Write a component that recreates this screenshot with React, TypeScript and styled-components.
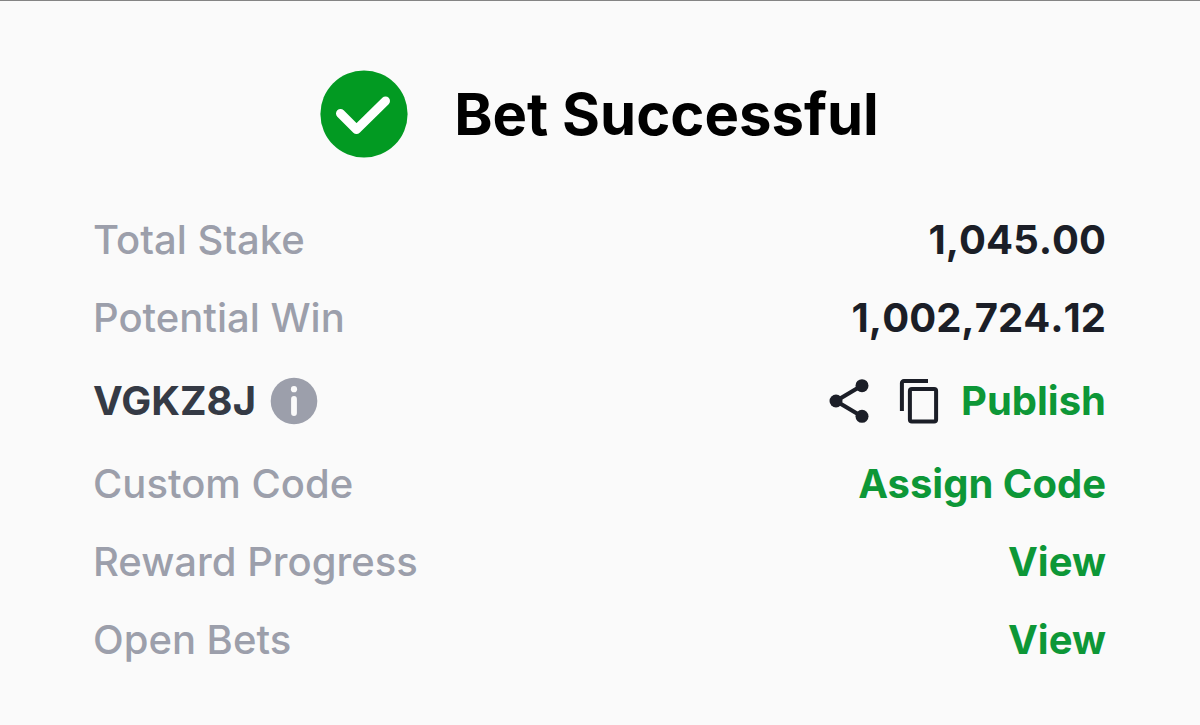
import React from "react";
import styled, { createGlobalStyle } from "styled-components";

const GlobalStyle = createGlobalStyle`
  *, *::before, *::after { box-sizing: border-box; }
  body {
    margin: 0;
    background: #fafafa;
    font-family: Inter, "Liberation Sans", sans-serif;
  }
`;

const Receipt = styled.main`
  min-height: 100vh;
  padding: 69px 94px 60px 93px;
  border-top: 1px solid #848484;
  background: #fafafa;
`;

const Header = styled.header`
  display: flex;
  align-items: center;
  justify-content: center;
  gap: 46px;
  margin-bottom: 58px;
`;

const Title = styled.h1`
  margin: 0;
  color: #000;
  font-size: 58px;
  font-weight: 700;
  line-height: 72px;
`;

const Details = styled.div`
  display: flex;
  flex-direction: column;
  gap: 30px;
`;

const Row = styled.div<{ $tall?: boolean }>`
  display: flex;
  align-items: center;
  justify-content: space-between;
  min-height: ${({ $tall }) => ($tall ? 58 : 48)}px;
  font-size: 40px;
  line-height: 48px;
`;

const Label = styled.span`
  color: #9c9fab;
  font-weight: 500;
`;

const Value = styled.span`
  color: #1b1e27;
  font-weight: 700;
  font-kerning: none;
`;

const BookingCode = styled.div`
  display: flex;
  align-items: center;
  gap: 14px;
  color: #353a45;
  font-weight: 700;
`;

const Actions = styled.div`
  display: flex;
  align-items: center;
  gap: 22px;
`;

const IconButton = styled.button`
  display: flex;
  padding: 0;
  border: 0;
  background: none;
  color: #1b1e27;
  cursor: pointer;
`;

const ShareButton = styled(IconButton)`
  margin-right: 8px;
`;

const TextButton = styled.button`
  padding: 0;
  border: 0;
  background: none;
  color: #0d9737;
  font: inherit;
  font-weight: 700;
  cursor: pointer;
`;

const SuccessIcon = () => (
  <svg width="88" height="88" viewBox="0 0 88 88" aria-hidden="true">
    <circle cx="44" cy="44" r="43.6" fill="#029a22" />
    <path
      d="M20.5 43.5 36.5 59.5 65.5 31"
      fill="none"
      stroke="#fff"
      strokeWidth="9"
      strokeLinecap="round"
      strokeLinejoin="round"
    />
  </svg>
);

const InfoIcon = () => (
  <svg width="48" height="48" viewBox="0 0 48 48" aria-hidden="true">
    <circle cx="24" cy="24" r="23.3" fill="#9c9fab" />
    <circle cx="24" cy="12.2" r="3.1" fill="#fafafa" />
    <path d="M24 22v14" stroke="#fafafa" strokeWidth="5.8" strokeLinecap="round" />
  </svg>
);

const ShareIcon = () => (
  <svg width="40" height="46" viewBox="0 0 40 46" aria-hidden="true">
    <path d="M33 7.5 7 23l26 15.5" fill="none" stroke="currentColor" strokeWidth="4.2" />
    <circle cx="33" cy="7.7" r="6.5" fill="currentColor" />
    <circle cx="7" cy="23" r="6.5" fill="currentColor" />
    <circle cx="33" cy="38.3" r="6.5" fill="currentColor" />
  </svg>
);

const CopyIcon = () => (
  <svg width="40" height="46" viewBox="0 0 40 46" aria-hidden="true">
    <path
      d="M2.9 33V5.1a2 2 0 0 1 2-2H29"
      fill="none"
      stroke="currentColor"
      strokeWidth="4"
    />
    <rect
      x="10.9"
      y="11"
      width="26.2"
      height="32.4"
      rx="2"
      fill="none"
      stroke="currentColor"
      strokeWidth="4"
    />
  </svg>
);

const amounts = [
  { label: "Total Stake", value: "1,045.00" },
  { label: "Potential Win", value: "1,002,724.12" },
];

const links = [
  { label: "Custom Code", action: "Assign Code" },
  { label: "Reward Progress", action: "View" },
  { label: "Open Bets", action: "View" },
];

export default function App() {
  return (
    <>
      <GlobalStyle />
      <Receipt>
        <Header>
          <SuccessIcon />
          <Title>Bet Successful</Title>
        </Header>
        <Details>
          {amounts.map(({ label, value }) => (
            <Row key={label}>
              <Label>{label}</Label>
              <Value>{value}</Value>
            </Row>
          ))}
          <Row $tall>
            <BookingCode>
              VGKZ8J
              <IconButton type="button" aria-label="About this code">
                <InfoIcon />
              </IconButton>
            </BookingCode>
            <Actions>
              <ShareButton type="button" aria-label="Share">
                <ShareIcon />
              </ShareButton>
              <IconButton type="button" aria-label="Copy code">
                <CopyIcon />
              </IconButton>
              <TextButton type="button">Publish</TextButton>
            </Actions>
          </Row>
          {links.map(({ label, action }) => (
            <Row key={label}>
              <Label>{label}</Label>
              <TextButton type="button" aria-label={`${action}, ${label}`}>
                {action}
              </TextButton>
            </Row>
          ))}
        </Details>
      </Receipt>
    </>
  );
}
